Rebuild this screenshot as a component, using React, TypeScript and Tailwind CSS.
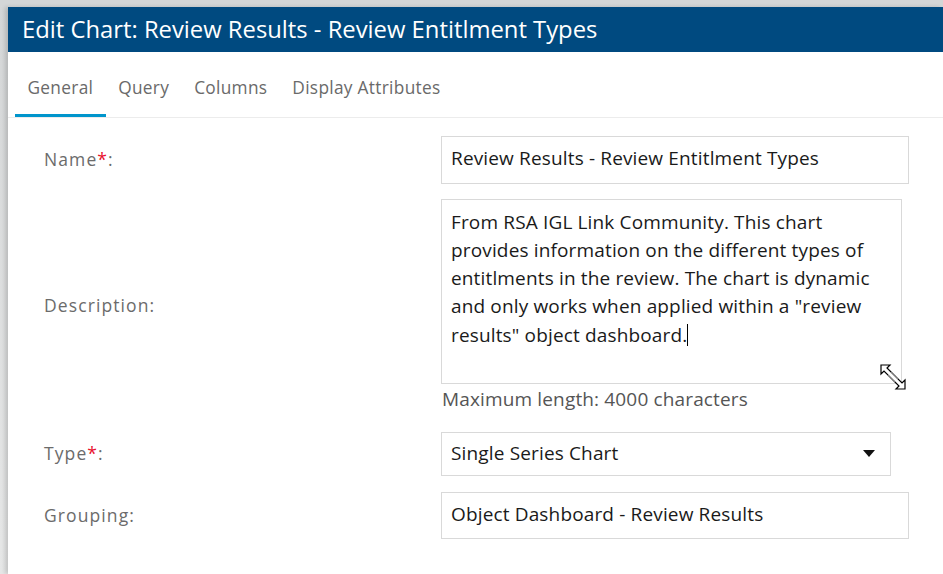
import { useState } from "react";

const TABS = ["General", "Query", "Columns", "Display Attributes"];

function Label({ text, required }: { text: string; required?: boolean }) {
  return (
    <div className="w-[433px] shrink-0 pb-[2px] pl-[36px] text-[17.5px] tracking-[1.1px] text-[#6b6b6b]">
      {text}
      {required && <span className="text-[#e8112d]">*</span>}:
    </div>
  );
}

export default function App() {
  const [active] = useState("General");

  return (
    <div
      className="h-[574px] w-[943px] overflow-hidden bg-gradient-to-b from-[#d4d6d7] to-[#e6e7e7] pl-[8px] pt-[7px]"
      style={{ fontFamily: '"Open Sans", "Noto Sans", sans-serif' }}
    >
      <div className="h-full bg-white shadow-[-3px_0_4px_rgba(0,0,0,0.15)]">
        <div className="flex h-[45px] items-center bg-[#004a80] pl-[14px] text-[23.8px] text-white">
          Edit Chart: Review Results - Review Entitlment Types
        </div>

        <div className="mt-[21px] flex border-b border-[#ececec] pl-[7px]">
          {TABS.map((t) => (
            <div
              key={t}
              className={`px-[12.5px] pb-[13px] pt-[2px] text-[17.3px] tracking-[0.3px] text-[#6a6a6a] border-b-[3px] ${
                t === active ? "border-[#0095cc]" : "border-transparent"
              }`}
            >
              {t}
            </div>
          ))}
        </div>

        <div className="mt-[18px] flex flex-col">
          <div className="flex items-center">
            <Label text="Name" required />
            <div className="flex h-[48px] w-[468px] items-center border border-[#d9d9d9] px-[9px] pb-[3px] text-[19px] tracking-[0.15px] text-[#1a1a1a]">
              Review Results - Review Entitlment Types
            </div>
          </div>

          <div className="mt-[15px] flex items-center">
            <Label text="Description" />
            <div className="flex flex-col">
              <div className="relative h-[185px] w-[461px] border border-[#d9d9d9] px-[9px] pt-[8px] text-[19px] leading-[28px] tracking-[0.15px] text-[#1a1a1a]">
                From RSA IGL Link Community. This chart provides information on the different types of entitlments in the review. The chart is dynamic and only works when applied within a "review results" object dashboard.
                <span className="inline-block h-[22px] w-px translate-y-[4px] bg-black" />
                <svg
                  className="absolute left-[437px] top-[163px]"
                  width="28"
                  height="28"
                  viewBox="0 0 28 28"
                >
                  <path
                    d="M2 2 L11 2 L8 5 L23 20 L26 17 L26 26 L17 26 L20 23 L5 8 L2 11 Z"
                    fill="white"
                    stroke="black"
                    strokeWidth="1.2"
                    strokeLinejoin="miter"
                  />
                  <path d="M9 12 L16 19 M12 9 L19 16" stroke="#999" strokeWidth="0.8" />
                </svg>
              </div>
              <div className="mt-[1px] pl-[1px] text-[19px] tracking-[0.15px] text-[#555]">
                Maximum length: 4000 characters
              </div>
            </div>
          </div>

          <div className="mt-[19px] flex items-center">
            <Label text="Type" required />
            <div className="flex h-[44px] w-[450px] items-center justify-between border border-[#d9d9d9] pb-[2px] pl-[9px] pr-[15px] text-[19px] tracking-[0.15px] text-[#1a1a1a]">
              <span>Single Series Chart</span>
              <svg width="12" height="7" viewBox="0 0 12 7">
                <path d="M0 0 L12 0 L6 7 Z" fill="#111" />
              </svg>
            </div>
          </div>

          <div className="mt-[16px] flex items-center">
            <Label text="Grouping" />
            <div className="flex h-[47px] w-[468px] items-center border border-[#d9d9d9] px-[9px] pb-[3px] text-[19px] tracking-[0.15px] text-[#1a1a1a]">
              Object Dashboard - Review Results
            </div>
          </div>
        </div>
      </div>
    </div>
  );
}
